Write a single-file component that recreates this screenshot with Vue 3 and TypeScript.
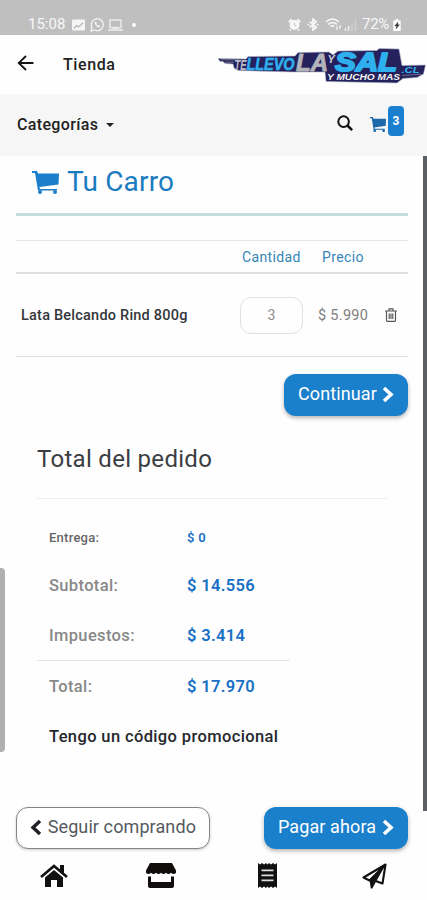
<script setup lang="ts">
interface SummaryRow {
  label: string
  value: string
  kind: string
}

const summary: SummaryRow[] = [
  { label: 'Entrega:', value: '$ 0', kind: 'small' },
  { label: 'Subtotal:', value: '$ 14.556', kind: 'sub' },
  { label: 'Impuestos:', value: '$ 3.414', kind: 'tax' },
  { label: 'Total:', value: '$ 17.970', kind: 'total' },
]
</script>

<template>
  <div class="screen">
    <div class="status">
      <span class="clock">15:08</span>
      <svg class="s-photo" viewBox="0 0 14 12"><rect width="14" height="12" rx="1.500" fill="#f5f5f5" /><path d="M2 9.500l3-3 2 1.500 5-4.500" stroke="#b5b5b5" stroke-width="1.300" fill="none" /></svg>
      <svg class="s-chat" viewBox="0 0 14 14"><path d="M1 13l1-3.500A6 6 0 1 1 4.500 12z" fill="none" stroke="#f5f5f5" stroke-width="1.300" /><path d="M4.800 4c-.8 2 2 5.500 4.700 5.500l1-1.300-1.700-1-.8.600L6.400 6.300l.5-.8L6 3.700z" fill="#f5f5f5" /></svg>
      <svg class="s-laptop" viewBox="0 0 15 12"><rect x="2" y="1" width="11" height="7.500" fill="none" stroke="#f0f0f0" stroke-width="1.300" /><path d="M0 11h15M4 9.200h7" stroke="#f0f0f0" stroke-width="1.300" /></svg>
      <i class="s-dot"></i>
      <svg class="s-alarm" viewBox="0 0 14 13"><circle cx="7" cy="7" r="5.300" fill="#f8f8f8" /><path d="M1 4l3-3M13 4l-3-3M3 12l-1 1M11 12l1 1" stroke="#f8f8f8" stroke-width="2.400" /><path d="M7 4.500v2.800l2 .8" stroke="#bbb" stroke-width="1" fill="none" /></svg>
      <svg class="s-blue" viewBox="0 0 12 14"><path d="M2.500 4l7 6L6 13V1l3.500 3-7 6M0 7h2M10 7h2" fill="none" stroke="#f8f8f8" stroke-width="1.800" /></svg>
      <svg class="s-wifi" viewBox="0 0 17 13"><path d="M1 4q6.500-6 13 0M3 6.500q4.500-4 9 0M5.500 8.500q2-1.500 4 0" fill="none" stroke="#f8f8f8" stroke-width="1.500" /><path d="M12 8v4M15 7v4" stroke="#f8f8f8" stroke-width="1.200" /></svg>
      <svg class="s-signal" viewBox="0 0 13 12"><path d="M1.500 9v3M4.500 7v5" stroke="#f0f0f0" stroke-width="1.400" /><path d="M8 4v8M11.500 1v11" stroke="#d0d0d0" stroke-width="1.500" /></svg>
      <span class="percent">72%</span>
      <svg class="s-batt" viewBox="0 0 8 13"><path d="M2.500 0h3v1.500H8V13H0V1.500h2.500z" fill="#fff" /><path d="M4.800 3.500L1.800 7.500h2L3 10.500l3.500-4.200h-2z" fill="#333" stroke="#333" stroke-width=".6" /></svg>
    </div>

    <header class="header">
      <svg class="back" viewBox="0 0 16 16"><path d="M16 8H1.500M8.500 1L1.200 8l7.300 7" fill="none" stroke="#151515" stroke-width="1.800" /></svg>
      <span class="store">Tienda</span>
      <svg class="logo" viewBox="0 0 210 38">
        <path d="M1 11.500L29 12L31 9.500L78 9L81 5.500L112 5L116 8L121 4L160 3.500L162 1.500L182 2L185 18.500L208.500 18L206.500 27L200 30.500L186 31.500L180 36L109 34.500L108 25L76 25L21 23.500L17 21L16 17L8 16.500L6 14.500L3 14.500Z" fill="#24215c" stroke="#b5b8ca" stroke-width=".6" />
        <path d="M4 12.800h18M8 15.200h9M185 28.500l19-1.300" stroke="#85879b" stroke-width=".8" />
        <g font-family="Liberation Sans, sans-serif" font-weight="bold" font-style="italic" stroke-linejoin="round">
          <text x="17.500" y="22.500" font-size="15" fill="#bcbcc5" textLength="12" lengthAdjust="spacingAndGlyphs">TE</text>
          <text x="29.500" y="23" font-size="17" fill="#2fb0ee" stroke="#2fb0ee" stroke-width=".6" textLength="48" lengthAdjust="spacingAndGlyphs">LLEVO</text>
          <text x="79" y="23.500" font-size="23" fill="#b4b4bb" stroke="#b4b4bb" stroke-width=".9" textLength="32" lengthAdjust="spacingAndGlyphs">LA</text>
          <text x="110.500" y="16" font-size="11" fill="#d0d0d7">Y</text>
          <text x="118" y="23.500" font-size="26.500" fill="#2fb0ee" stroke="#2fb0ee" stroke-width="2" textLength="62" lengthAdjust="spacingAndGlyphs">SAL</text>
          <text x="184.500" y="26" font-size="8.500" fill="#35b5f0" textLength="18" lengthAdjust="spacingAndGlyphs">.CL</text>
          <text x="110" y="33" font-size="8.500" fill="#f2f2f2" textLength="73" lengthAdjust="spacingAndGlyphs">Y MUCHO MAS</text>
        </g>
      </svg>
    </header>

    <nav class="nav">
      <span class="cats">Categorías</span><i class="caret"></i>
      <svg class="search" viewBox="0 0 16 16"><circle cx="6.600" cy="6.600" r="5.300" fill="none" stroke="#111" stroke-width="2" /><path d="M10.500 10.500l4.600 4.600" stroke="#111" stroke-width="2.500" /></svg>
      <svg class="navcart" viewBox="0 0 27 23" preserveAspectRatio="none"><path d="M0 0h5l1 2.500h21l-.5 11L7.500 16l.4 2H25v1.500H6L3 2H0z" fill="#1c68a8" /><circle cx="8" cy="21" r="2.200" fill="#1c68a8" /><circle cx="23" cy="21" r="2.200" fill="#1c68a8" /></svg>
      <span class="badge">3</span>
    </nav>

    <main class="main">
      <h1 class="title">
        <svg class="bigcart" viewBox="0 0 27 23"><path d="M0 0h5l1 2.500h21l-.5 11L7.500 16l.4 2H25v1.500H6L3 2H0z" fill="#1b7fcc" /><circle cx="8" cy="21" r="2" fill="#1b7fcc" /><circle cx="23" cy="21" r="2" fill="#1b7fcc" /></svg>
        <span>Tu Carro</span>
      </h1>
      <div class="items">
        <div class="row head"><span class="c-qty">Cantidad</span><span class="c-price">Precio</span></div>
        <div class="row item">
          <span class="product">Lata Belcando Rind 800g</span>
          <span class="qty">3</span>
          <span class="price">$ 5.990</span>
          <svg class="trash" viewBox="0 0 12 14"><path d="M0 3h12M4 2.800V.8h4v2M1.500 3.500v9q0 .8.800.800h7.400q.8 0 .8-.8v-9M4.200 5.500v5.500M6 5.500v5.500M7.800 5.500v5.500" fill="none" stroke="#555" stroke-width="1.150" /></svg>
        </div>
      </div>
      <div class="continue">
        <button class="btn primary b-cont"><span>Continuar</span><svg class="chev" viewBox="0 0 12 16"><path d="M2 1.500L9 8l-7 6.500" fill="none" stroke="#fff" stroke-width="3.600" /></svg></button>
      </div>

      <section class="order">
        <h2>Total del pedido</h2>
        <dl class="sums">
          <div v-for="s in summary" :key="s.label" class="sum" :class="s.kind"><dt>{{ s.label }}</dt><dd>{{ s.value }}</dd></div>
        </dl>
        <p class="promo">Tengo un código promocional</p>
      </section>

      <div class="actions">
        <button class="btn outline"><svg class="chev" viewBox="0 0 12 16"><path d="M10 1.500L3 8l7 6.500" fill="none" stroke="#202028" stroke-width="3.400" /></svg><span>Seguir comprando</span></button>
        <button class="btn primary b-pay"><span>Pagar ahora</span><svg class="chev" viewBox="0 0 12 16"><path d="M2 1.500L9 8l-7 6.500" fill="none" stroke="#fff" stroke-width="3.600" /></svg></button>
      </div>
      <i class="thumb-right"></i>
    </main>

    <footer class="tabs">
      <svg class="t-home" viewBox="0 0 28 24"><path d="M1 13L14 2l13 11" fill="none" stroke="#111" stroke-width="2.600" /><path d="M20 1h4v9l-4-3.500zM5 13.500L14 6l9 7.500V23h-6v-7h-6v7H5z" fill="#111" /></svg>
      <svg class="t-shop" viewBox="0 0 30 25"><path d="M4 0h22l4 7.500v2.300q-2.500 2.600-5 0-2.500 2.600-5 0-2.500 2.600-5 0-2.500 2.600-5 0-2.500 2.600-5 0-2.500 2.600-5 0V7.500z" fill="#120d0d" /><path d="M2 13.500h3V19h20v-5.500h3V23q0 2-2 2H4q-2 0-2-2z" fill="#120d0d" /></svg>
      <svg class="t-receipt" viewBox="0 0 19 25"><path d="M0 0l2 1.500L4 0l2 1.500L8 0l1.500 1.500L11 0l2 1.500L15 0l2 1.500L19 0v25l-2-1.500-2 1.500-2-1.500-2 1.500-1.500-1.500L8 25l-2-1.500L4 25l-2-1.500L0 25z" fill="#111" /><path d="M3.500 7.300h12M3.500 12.300h12M3.500 17.300h12" stroke="#ddd" stroke-width="1.700" /></svg>
      <svg class="t-send" viewBox="0 0 25 26"><path d="M23.500 1.500L1.500 14.500l6 3L23.500 1.500l-3 19-7.500-2.700" fill="none" stroke="#111" stroke-width="2.100" stroke-linejoin="round" /><path d="M23.500 2L7.500 17l1.300 8.500h1.500l3.500-6.500z" fill="#111" /></svg>
    </footer>
    <i class="thumb-left"></i>
  </div>
</template>

<style>
body { background: #fff; }
</style>

<style scoped>
* { box-sizing: border-box; }
.screen { width: 427px; height: 900px; position: relative; overflow: hidden; background: #fefefe; font-family: Roboto, "Liberation Sans", sans-serif; color: #212529; display: flex; flex-direction: column; white-space: nowrap; }
svg { display: block; flex: none; }
i { display: block; flex: none; }

.status { height: 35px; flex: none; background: #bfbfbf; display: flex; align-items: center; padding: 14px 26px 0 28px; color: #f8f8f8; }
.clock { font-size: 15px; width: 44px; line-height: 21px; }
.s-photo { width: 13px; height: 12px; }
.s-chat { width: 14px; height: 14px; margin-left: 5px; }
.s-laptop { width: 15px; height: 12px; margin-left: 4px; }
.s-dot { width: 4px; height: 4px; border-radius: 50%; background: #fff; margin-left: 9px; }
.s-alarm { width: 13px; height: 13px; margin-left: auto; }
.s-blue { width: 12px; height: 13px; margin-left: 6px; }
.s-wifi { width: 17px; height: 13px; margin-left: 6px; }
.s-signal { width: 13px; height: 12px; margin-left: 2px; }
.percent { font-size: 15px; line-height: 21px; margin-left: 5px; width: 29px; letter-spacing: -.3px; }
.s-batt { width: 8px; height: 12px; margin-left: 2px; }

.header { height: 59px; flex: none; display: flex; align-items: center; padding-left: 17px; }
.back { width: 17px; height: 16px; margin-top: -3px; }
.store { margin-left: 29px; font-size: 16px; font-weight: 500; letter-spacing: .6px; width: 154px; color: #222; }
.logo { width: 210px; height: 38px; margin-top: 2px; }

.nav { height: 62px; flex: none; background: #f6f6f6; display: flex; align-items: center; padding-left: 17px; }
.cats { font-size: 16px; font-weight: 500; letter-spacing: .35px; color: #222; width: 89px; margin-top: -2px; }
.caret { border: 4px solid transparent; border-top: 4px solid #222; border-bottom: 0; margin-top: -1px; }
.search { width: 16px; height: 16px; margin: -4px 0 0 223px; }
.navcart { width: 16px; height: 15px; margin: -1px 0 0 17px; }
.badge { width: 16px; height: 30px; margin: -9px 0 0 2px; background: #1b7fd0; border-radius: 4px; color: #fff; font-size: 12px; font-weight: 700; text-align: center; line-height: 30px; }

.main { height: 694px; flex: none; position: relative; padding: 0 19px 0 16px; }
.title { margin: 0; height: 60px; border-bottom: 3px solid #c6dee2; display: flex; align-items: center; padding: 0 0 6px 16px; font-size: 28px; font-weight: 400; color: #1b7bc0; }
.bigcart { width: 27px; height: 23px; margin-top: 1px; }
.title span { margin-left: 8px; letter-spacing: .15px; }
.items { margin-top: 24px; }
.row { display: flex; align-items: center; }
.head { height: 34px; border-top: 1px solid #e5e7e8; border-bottom: 2px solid #dcdfe1; font-size: 14px; letter-spacing: .38px; color: #3685b8; }
.c-qty { margin-left: 226px; width: 80px; }
.item { height: 83px; border-bottom: 1px solid #dbdedf; padding-left: 5px; }
.product { width: 219px; font-size: 14.500px; font-weight: 500; letter-spacing: .22px; color: #33373b; }
.qty { width: 63px; height: 37px; border: 1px solid #dfe2e5; border-radius: 11px; display: flex; align-items: center; justify-content: center; font-size: 14px; color: #8b8b8b; }
.price { margin-left: 15px; width: 67px; font-size: 14.500px; letter-spacing: .3px; color: #808080; }
.trash { width: 12px; height: 14px; }

.btn { height: 42px; border: 0; border-radius: 12px; font: 400 18px/42px Roboto, "Liberation Sans", sans-serif; letter-spacing: .1px; display: flex; align-items: center; justify-content: space-between; padding: 0 14px 2px; }
.primary { background: #1b80cb; color: #fff; box-shadow: 0 2px 4px rgba(0, 0, 0, .3); }
.chev { width: 12px; height: 17px; }
.continue { padding-top: 17px; display: flex; justify-content: flex-end; }
.b-cont { width: 124px; }
.order { margin: 28px 0 0 21px; width: 350px; }
h2 { margin: 0; height: 55px; border-bottom: 1px solid #eee; font-size: 24px; line-height: 30px; font-weight: 400; letter-spacing: .3px; color: #3a3d42; }
.sums { margin: 15px 0 0; width: 253px; }
.sum { display: flex; align-items: center; height: 51px; padding-left: 12px; font-size: 16.500px; font-weight: 500; letter-spacing: .35px; }
.sum.small { height: 47px; font-size: 13px; letter-spacing: .25px; }
.sum.sub { height: 49px; }
.sum.tax { border-bottom: 1px solid #e5e5e5; }
.small dt { color: #666; }
dt { width: 138px; color: #888; }
dd { margin: 0; color: #1870c5; font-weight: 600; letter-spacing: .35px; }
.promo { margin: 15px 0 0 12px; font-size: 16.500px; line-height: 20px; font-weight: 500; letter-spacing: .37px; color: #25282d; }
.actions { display: flex; justify-content: space-between; position: absolute; left: 16px; right: 19px; bottom: 1px; }
.outline { width: 194px; border: 1px solid #858585; background: #fff; color: #555a60; box-shadow: 0 1px 3px rgba(0, 0, 0, .2); padding-left: 13px; padding-right: 13px; }
.b-pay { width: 144px; }
.thumb-right { position: absolute; right: 0; top: 0; width: 4px; height: 655px; background: #5d5f67; }
.thumb-left { position: absolute; left: 0; top: 568px; width: 5px; height: 184px; background: #b0b0b0; border-radius: 0 4px 4px 0; }
.tabs { height: 50px; flex: none; display: flex; align-items: center; padding: 1px 0 0 40px; }
.t-home { width: 28px; height: 24px; }
.t-shop { width: 30px; height: 25px; margin-left: 78px; }
.t-receipt { width: 19px; height: 25px; margin-left: 82px; }
.t-send { width: 25px; height: 26px; margin-left: 85px; }
</style>
